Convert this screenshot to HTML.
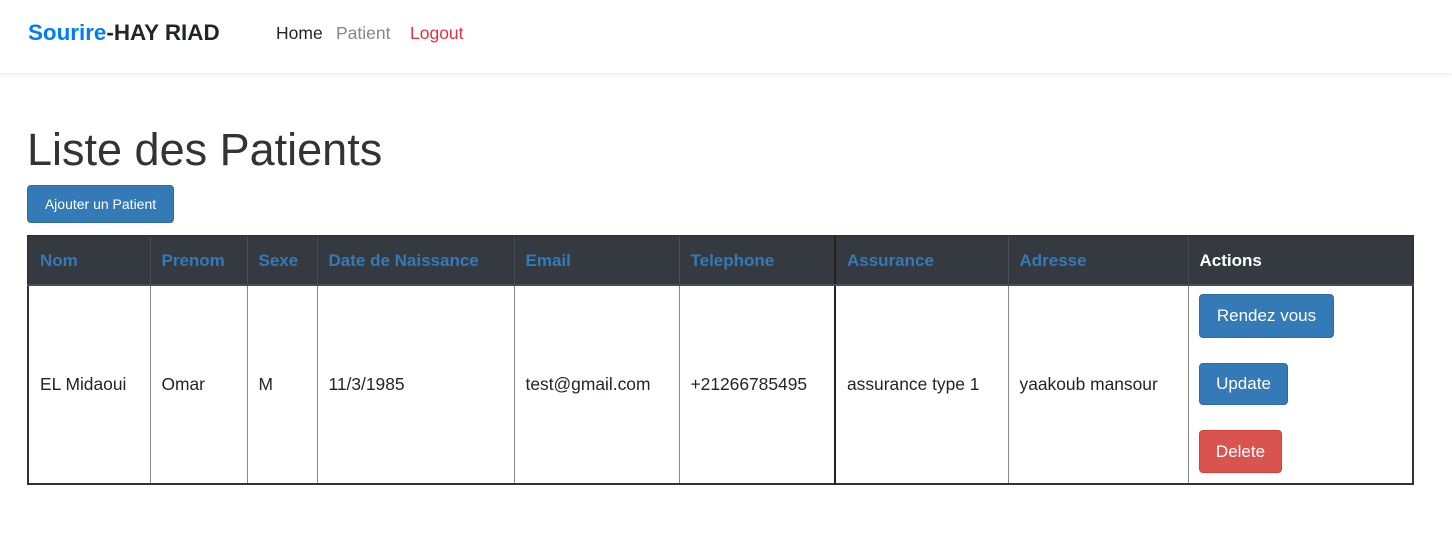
<!DOCTYPE html>
<html><head><style>
*{margin:0;padding:0;box-sizing:border-box}
body{width:1452px;height:538px;background:#fff;font-family:"Liberation Sans",Arial,sans-serif;position:relative;overflow:hidden;color:#212529}
.nav{position:absolute;left:0;top:0;width:1452px;height:73px;background:#fff;box-shadow:0 2px 4px rgba(0,0,0,.08)}
.a{position:absolute;white-space:nowrap}
.btn{position:absolute;background:#337ab7;color:#fff;border:1px solid #2e6da4;border-radius:4px;font-size:17px;display:flex;align-items:center;justify-content:center}
table{position:absolute;left:27px;top:235px;width:1387px;height:250px;border-collapse:collapse;border:2px solid #333;table-layout:fixed}
th{background:#343a40;color:#337ab7;text-align:left;font-size:17px;font-weight:bold;height:49px;padding:0 11px;border:1px solid #454d55;border-bottom:2px solid #454d55}
td{font-size:17.4px;padding:0 11px;border:1px solid #888;vertical-align:middle;white-space:nowrap}
</style></head><body>
<div class="nav">
<div class="a" style="left:28px;top:20px;font-size:22.4px;font-weight:bold"><span style="color:#007bff">Sourire</span>-HAY RIAD</div>
<div class="a" style="left:276px;top:23px;font-size:17.5px;color:#212529">Home</div>
<div class="a" style="left:336px;top:23px;font-size:17.5px;color:#888">Patient</div>
<div class="a" style="left:410px;top:23px;font-size:17.5px;color:#dc3545">Logout</div>
</div>
<div class="a" style="left:27px;top:124px;font-size:45px;color:#333">Liste des Patients</div>
<div class="btn" style="left:27px;top:185px;width:147px;height:38px;font-size:14px">Ajouter un Patient</div>
<table>
<tr><th style="width:122px">Nom</th><th style="width:97px">Prenom</th><th style="width:70px">Sexe</th><th style="width:197px">Date de Naissance</th><th style="width:165px">Email</th><th style="width:156px;border-right:2px solid #222">Telephone</th><th style="width:173px">Assurance</th><th style="width:180px">Adresse</th><th style="color:#fff">Actions</th></tr>
<tr><td>EL Midaoui</td><td>Omar</td><td>M</td><td>11/3/1985</td><td>test@gmail.com</td><td style="border-right:2px solid #222">+21266785495</td><td>assurance type 1</td><td>yaakoub mansour</td><td></td></tr>
</table>
<div class="btn" style="left:1199px;top:294px;width:135px;height:44px">Rendez vous</div>
<div class="btn" style="left:1199px;top:363px;width:89px;height:42px">Update</div>
<div class="btn" style="left:1199px;top:430px;width:83px;height:43px;background:#d9534f;border-color:#d43f3a">Delete</div>
</body></html>
